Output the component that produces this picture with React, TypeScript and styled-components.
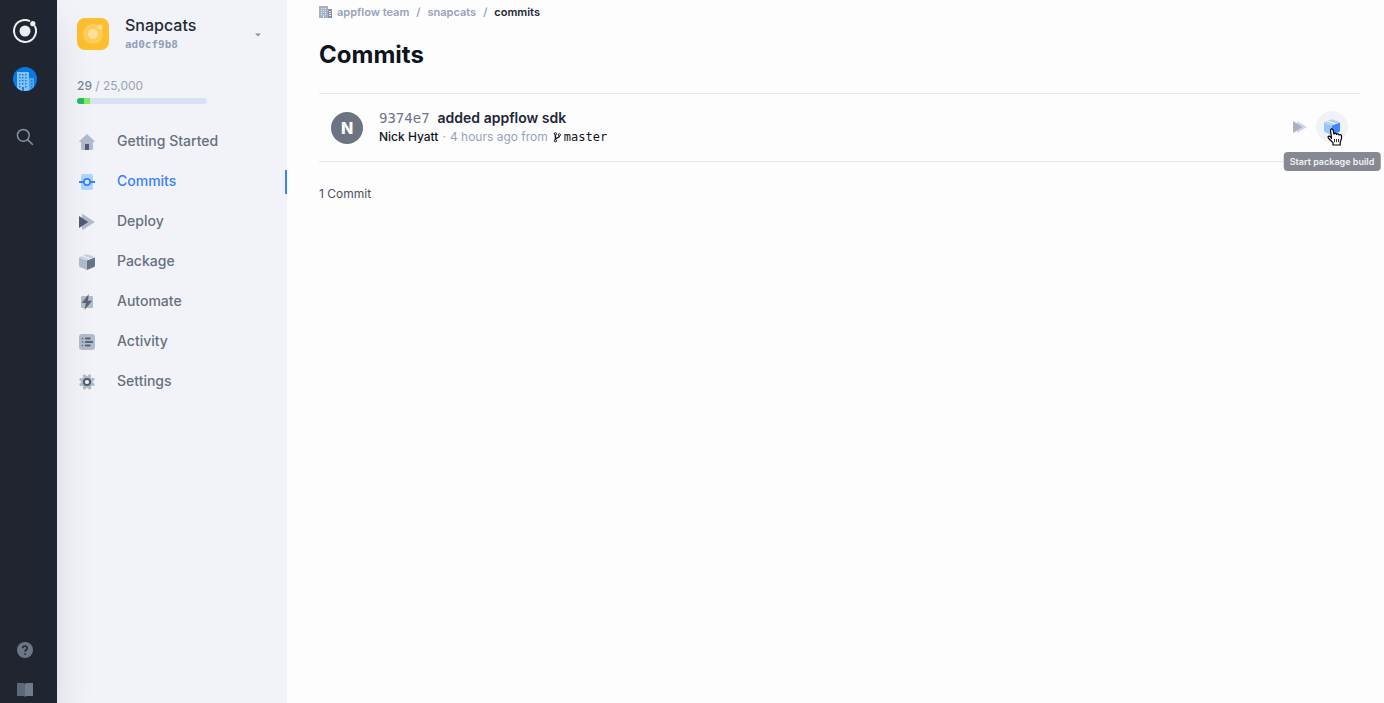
import React from "react";
import styled, { createGlobalStyle, css } from "styled-components";

const sans = `Inter, "Liberation Sans", sans-serif`;
const mono = `"DejaVu Sans Mono", "Liberation Mono", monospace`;

const GlobalStyle = createGlobalStyle`
  *, *::before, *::after { box-sizing: border-box; }
  body { margin: 0; background: #fdfdfe; font-family: ${sans}; color: #222834; }
  button { border: 0; padding: 0; background: none; font: inherit; color: inherit; cursor: pointer; }
  a { color: inherit; text-decoration: none; }
  svg { display: block; flex: none; }
`;

const Page = styled.div`
  display: grid;
  grid-template-columns: 57px 230px minmax(0, 1fr);
  min-height: 100vh;
  overflow: hidden;
`;

const Rail = styled.nav`
  z-index: 1;
  display: flex;
  flex-direction: column;
  align-items: flex-start;
  padding: 19px 13px 1px;
  background: linear-gradient(90deg, #21252f, #1f2631);
  box-shadow: 0 24px 40px rgba(0, 0, 0, 0.11);
`;

const RailButton = styled.button<{ $gap?: number; $push?: boolean }>`
  display: flex;
  align-items: center;
  justify-content: center;
  width: 24px;
  height: 24px;
  margin-top: ${(p) => (p.$push ? "auto" : `${p.$gap ?? 0}px`)};
`;

const Sidebar = styled.aside`
  background: #f2f3f8;
`;

const AppSwitcher = styled.button`
  display: flex;
  align-items: center;
  width: 100%;
  padding: 15px 25px 0 20px;
  text-align: left;
`;

const AppName = styled.span`
  display: block;
  margin-bottom: 2px;
  font-size: 16px;
  line-height: 20px;
  font-weight: 500;
  color: #222834;
`;

const AppId = styled.span`
  display: block;
  font: 700 11px/16px ${mono};
  color: #92a0b9;
`;

const AppLabel = styled.span`
  flex: 1;
  margin-left: 16px;
`;

const Usage = styled.div`
  width: 130px;
  margin: 25px 0 0 20px;
  font-size: 12px;
  line-height: 16px;
  font-weight: 400;
  color: #98a2b5;
`;

const UsageCount = styled.span`
  font-weight: 500;
  color: #7d8799;
`;

const Meter = styled.div`
  display: flex;
  height: 6px;
  margin-top: 4px;
  border-radius: 3px;
  overflow: hidden;
  background: #d9e1f2;
`;

const MeterPart = styled.div<{ $width: number; $color: string }>`
  width: ${(p) => p.$width}px;
  background: ${(p) => p.$color};
`;

const Menu = styled.nav`
  display: flex;
  flex-direction: column;
  margin-top: 17px;
`;

const MenuLink = styled.a<{ $active?: boolean }>`
  display: flex;
  align-items: center;
  gap: 22px;
  height: 40px;
  padding-left: 22px;
  font-size: 14px;
  line-height: 20px;
  font-weight: 500;
  color: ${(p) => (p.$active ? "#3880ff" : "#667080")};
  ${(p) =>
    p.$active &&
    css`
      background: linear-gradient(#3880ff, #3880ff) right bottom 7px / 2px 24px no-repeat;
    `}
  svg { margin-top: 2px; }
`;

const Main = styled.main`
  padding: 4px 24px 32px 32px;
`;

const Crumbs = styled.nav`
  display: flex;
  align-items: center;
  gap: 7px;
  font-size: 11px;
  line-height: 16px;
  font-weight: 600;
  color: #97a3b9;
`;

const Crumb = styled.a<{ $current?: boolean }>`
  display: flex;
  align-items: center;
  gap: 4px;
  color: ${(p) => (p.$current ? "#222834" : "inherit")};
`;

const Title = styled.h1`
  margin: 18px 0 22px;
  font-size: 24px;
  line-height: 33px;
  font-weight: 700;
  color: #0f141f;
`;

const CommitList = styled.ul`
  margin: 0;
  padding: 0;
  list-style: none;
  border-top: 1px solid #e6e8eb;
`;

const CommitRow = styled.li`
  display: flex;
  align-items: center;
  height: 68px;
  padding: 0 12px;
  border-bottom: 1px solid #e6e8eb;
`;

const Avatar = styled.span`
  display: grid;
  place-items: center;
  width: 32px;
  height: 32px;
  margin-right: 16px;
  border-radius: 50%;
  background: #6b7480;
  color: #fff;
  font-size: 16px;
  font-weight: 800;
`;

const CommitBody = styled.div`
  flex: 1;
  padding-bottom: 2px;
`;

const CommitTitle = styled.div`
  display: flex;
  align-items: baseline;
  gap: 8px;
  font-size: 14px;
  line-height: 20px;
  font-weight: 600;
`;

const Sha = styled.a`
  font-family: ${mono};
  font-weight: 400;
  color: #6b7488;
`;

const CommitMeta = styled.div`
  display: flex;
  align-items: center;
  gap: 4px;
  font-size: 12px;
  line-height: 18px;
  color: #97a3b9;
`;

const Author = styled.span`
  font-weight: 500;
  color: #10151f;
`;

const Branch = styled.a`
  display: flex;
  align-items: center;
  gap: 2px;
  padding-left: 1px;
  font-family: ${mono};
  color: #10151f;
`;

const Actions = styled.div`
  display: flex;
  align-items: center;
  padding-bottom: 2px;
`;

const Action = styled.button<{ $hover?: boolean }>`
  position: relative;
  display: grid;
  place-items: center;
  width: 32px;
  height: 32px;
  border-radius: 50%;
  background: ${(p) => (p.$hover ? "#f1f2f7" : "transparent")};
`;

const Tooltip = styled.span`
  position: absolute;
  top: 41px;
  left: 50%;
  transform: translateX(-50%);
  padding: 0 6px;
  border-radius: 4px;
  background: #868991;
  color: #f1f2f4;
  font-size: 9px;
  line-height: 19px;
  font-weight: 600;
  white-space: nowrap;
`;

const Pointer = styled.svg`
  position: absolute;
  top: 17px;
  left: 11px;
`;

const Total = styled.p`
  margin: 24px 0 0;
  font-size: 12px;
  line-height: 16px;
  color: #4a5160;
`;

const Cube = ({ size = 16, tones }: { size?: number; tones: string[] }) => (
  <svg width={size} height={size} viewBox="0 0 16 16" aria-hidden="true">
    <path d="M0 3.600 8 6.400V16L.9 13.100Q0 12.700 0 11.800Z" fill={tones[0]} />
    <path d="M16 3.600 8 6.400V16l7.100-2.900q.9-.4.9-1.300Z" fill={tones[1]} />
    <path d="m0 3.200 2.200-1L10.400 5 8 6ZM3.800 1.600 7 .4q1-.4 2 0l7 2.800-3.800 1.400Z" fill={tones[2]} />
  </svg>
);

const icons: Record<string, React.ReactNode> = {
  home: (
    <>
      <path d="M8 0 .2 7.200q-.4.8.6.8H2v7q0 1 1 1h10q1 0 1-1V8h1.200q1 0 .6-.8Z" fill="#b0bccd" />
      <path d="M6 10h4v6H6Z" fill="#525c70" />
    </>
  ),
  commits: (
    <>
      <rect x="2" width="12" height="16" rx="2" fill="#add6fe" />
      <path d="M0 8h4.500M11.500 8H16" stroke="#3880ff" strokeWidth="2" />
      <circle cx="8" cy="8" r="3.200" fill="#d5eaff" stroke="#3880ff" strokeWidth="1.800" />
    </>
  ),
  deploy: (
    <>
      <path d="M3 .8q0-1 1-.5L16 8 4 15.700q-1 .5-1-.5Z" fill="#b0bccd" />
      <path d="M0 2 9.300 8 0 14Z" fill="#525c70" />
    </>
  ),
  automate: (
    <>
      <rect x="2" y="2" width="12" height="12" rx="1" fill="#b0bccd" />
      <path d="M9.800 0 2.800 9H7L5.400 16 13.200 6.700H9Z" fill="#596477" />
    </>
  ),
  activity: (
    <>
      <rect width="16" height="16" rx="3" fill="#b0bccd" />
      <path d="M6.800 4.500h4M6.800 8h6.400M6.800 11.500h4" stroke="#596477" strokeWidth="1.900" strokeLinecap="round" />
      <path d="M3.500 4.500h.01M3.500 8h.01M3.500 11.500h.01" stroke="#596477" strokeWidth="1.700" strokeLinecap="round" />
    </>
  ),
  settings: (
    <>
      {[0, 45, 90, 135].map((a) => (
        <path key={a} d="M6.800 0h2.400l1 4v8l-1 4H6.800l-1-4V4Z" transform={`rotate(${a + 22} 8 8)`} fill="#b0bccd" />
      ))}
      <circle cx="8" cy="8" r="6" fill="#b0bccd" />
      <circle cx="8" cy="8" r="3.100" fill="#f2f3f8" stroke="#525c70" strokeWidth="2" />
    </>
  ),
};

const Icon = ({ name }: { name: string }) =>
  name === "package" ? (
    <Cube tones={["#b0bccd", "#68748a", "#c5cfdd"]} />
  ) : (
    <svg width="16" height="16" viewBox="0 0 16 16" aria-hidden="true">{icons[name]}</svg>
  );

const menu = [
  ["Getting Started", "home"],
  ["Commits", "commits"],
  ["Deploy", "deploy"],
  ["Package", "package"],
  ["Automate", "automate"],
  ["Activity", "activity"],
  ["Settings", "settings"],
];

const BuildingWindows = ({ fill }: { fill: string }) => (
  <g fill={fill}>
    {[7, 10, 13].map((y) => [6, 9, 12].map((x) => <rect key={`${x}-${y}`} x={x} y={y} width="1.500" height="1.500" />))}
    {[16, 19].map((y) => [6, 12].map((x) => <rect key={`${x}-${y}`} x={x} y={y} width="1.500" height="1.500" />))}
    <rect x="9" y="16" width="1.500" height="1.500" />
    <rect x="9" y="20" width="2" height="4" />
    {[13, 16, 19].map((y) => <rect key={y} x="18" y={y} width="1.500" height="1.500" />)}
  </g>
);

export default function App() {
  return (
    <>
      <GlobalStyle />
      <Page>
        <Rail aria-label="Workspace">
          <RailButton aria-label="Home">
            <svg width="24" height="24" viewBox="0 0 24 24">
              <path d="M17 2.200A11 11 0 1 0 21.800 7" fill="none" stroke="#eceef1" strokeWidth="2" />
              <circle cx="12" cy="12" r="5.500" fill="#eceef1" />
              <circle cx="19.800" cy="4.700" r="2.600" fill="#eceef1" />
            </svg>
          </RailButton>
          <RailButton $gap={24} aria-label="Organization">
            <svg width="24" height="24" viewBox="0 0 24 24">
              <defs>
                <clipPath id="disc"><circle cx="12" cy="12" r="12" /></clipPath>
              </defs>
              <g clipPath="url(#disc)">
                <rect width="24" height="24" fill="#0878e8" />
                <path d="M4 5h12v19H4Z" fill="#81c5f6" />
                <path d="M16 11h5v13h-5Z" fill="#4da5f2" />
                <BuildingWindows fill="#187fd8" />
              </g>
            </svg>
          </RailButton>
          <RailButton $gap={34} aria-label="Search">
            <svg width="18" height="18" viewBox="0 0 18 18" fill="none" stroke="#8a919c" strokeWidth="1.500">
              <circle cx="7.300" cy="7.300" r="5.900" />
              <path d="m11.600 11.600 5.200 5.200" />
            </svg>
          </RailButton>
          <RailButton $push aria-label="Help">
            <svg width="16" height="16" viewBox="0 0 16 16">
              <circle cx="8" cy="8" r="8" fill="#6b7687" />
              <path d="M5.700 6.200C5.700 3.300 10.300 3.300 10.300 6.100 10.300 7.800 8 7.700 8 9.600M8 11.200v1.600" fill="none" stroke="#202733" strokeWidth="1.600" />
            </svg>
          </RailButton>
          <RailButton $gap={16} aria-label="Documentation">
            <svg width="16" height="14" viewBox="0 0 16 14">
              <path d="M0 0h6q1.500 0 2 1v13q-.5-1-2-1H0Z" fill="#5d6878" />
              <path d="M16 0h-6Q8.500 0 8 1v13q.5-1 2-1h6Z" fill="#6f7a8a" />
            </svg>
          </RailButton>
        </Rail>

        <Sidebar>
          <AppSwitcher>
            <svg width="32" height="32" viewBox="0 0 32 32" aria-hidden="true">
              <rect width="32" height="32" rx="8" fill="#fdbf2d" />
              <circle cx="16" cy="16" r="10" fill="#fdcd5c" />
              <circle cx="16" cy="16" r="5" fill="#fee09a" />
              <circle cx="23" cy="9" r="2.600" fill="#fedc8c" />
            </svg>
            <AppLabel>
              <AppName>Snapcats</AppName>
              <AppId>ad0cf9b8</AppId>
            </AppLabel>
            <svg width="8" height="6" viewBox="0 0 8 6" aria-hidden="true">
              <path d="M1 2.500h6L4 5.500Z" fill="#8b9099" />
            </svg>
          </AppSwitcher>
          <Usage>
            <UsageCount>29</UsageCount> / 25,000
            <Meter>
              <MeterPart $width={7} $color="#22bf5b" />
              <MeterPart $width={6} $color="#85e965" />
            </Meter>
          </Usage>
          <Menu aria-label="App">
            {menu.map(([label, icon]) => (
              <MenuLink key={label} href="#" $active={label === "Commits"}>
                <Icon name={icon} />
                {label}
              </MenuLink>
            ))}
          </Menu>
        </Sidebar>

        <Main>
          <Crumbs aria-label="Breadcrumb">
            <Crumb href="#">
              <svg width="14" height="12" viewBox="0 0 14 12" aria-hidden="true">
                <path d="M0 0h9v12H0Z" fill="#a5b1c5" />
                <path d="M9 3h4v9H9Z" fill="#8592a8" />
                <path d="M2 2h1v1H2ZM4 2h1v1H4ZM6 2h1v1H6ZM2 4h1v1H2ZM4 4h1v1H4ZM6 4h1v1H6ZM2 6h1v1H2ZM4 6h1v1H4ZM6 6h1v1H6ZM2 8h1v1H2ZM6 8h1v1H6ZM4 9h1v3H4ZM10 5h2v1h-2ZM10 7h2v1h-2ZM10 9h2v1h-2Z" fill="#e4e8ef" />
              </svg>
              appflow team
            </Crumb>
            <span>/</span>
            <Crumb href="#">snapcats</Crumb>
            <span>/</span>
            <Crumb href="#" $current>commits</Crumb>
          </Crumbs>
          <Title>Commits</Title>
          <CommitList>
            <CommitRow>
              <Avatar>N</Avatar>
              <CommitBody>
                <CommitTitle>
                  <Sha href="#">9374e7</Sha>
                  <span>added appflow sdk</span>
                </CommitTitle>
                <CommitMeta>
                  <Author>Nick Hyatt</Author>
                  <span>·</span>
                  <span>4 hours ago from</span>
                  <Branch href="#">
                    <svg width="9" height="12" viewBox="0 0 9 12" fill="none" stroke="#10151f" aria-hidden="true">
                      <circle cx="2.400" cy="2.800" r="1.100" />
                      <circle cx="2.400" cy="9.800" r="1.100" />
                      <circle cx="6.400" cy="3.800" r="1.100" />
                      <path d="M2.400 3.900v4.800M6.400 4.900c0 2.300-3.800 1.500-4 3.500" strokeWidth="1.400" />
                    </svg>
                    master
                  </Branch>
                </CommitMeta>
              </CommitBody>
              <Actions>
                <Action aria-label="Deploy commit">
                  <svg width="14" height="12" viewBox="0 0 14 12" aria-hidden="true">
                    <path d="M4 0 14 6 4 12Z" fill="#d0d8e7" />
                    <path d="M0 0 9.500 6 0 12Z" fill="#a9b2c3" />
                  </svg>
                </Action>
                <Action $hover>
                  <Cube tones={["#96c5ff", "#4288fc", "#b7cfee"]} />
                  <Tooltip>Start package build</Tooltip>
                  <Pointer width="16" height="18" viewBox="0 0 16 18" aria-hidden="true">
                    <path
                      d="M4.600 10.500 3.600 3.200C3.200.5 5.700.1 6.200 2.400L7 6.200C7.500 4.700 9.300 5 9.500 6.400 10.300 5.300 11.800 5.700 12 7c1-.8 2.600-.2 2.600 1.500 0 3.200-.9 4.200-1.400 5.500V17H6v-2.200C4.800 13.500 3 12 1.300 9.800.6 8.500 2.300 7.400 3.300 8.700Z"
                      fill="#fff" stroke="#000" strokeWidth="1.200" strokeLinejoin="round"
                    />
                    <path d="M7.500 11v3.200M9.500 11v3.200M11.500 11v3.200" stroke="#000" strokeWidth=".8" />
                  </Pointer>
                </Action>
              </Actions>
            </CommitRow>
          </CommitList>
          <Total>1 Commit</Total>
        </Main>
      </Page>
    </>
  );
}
